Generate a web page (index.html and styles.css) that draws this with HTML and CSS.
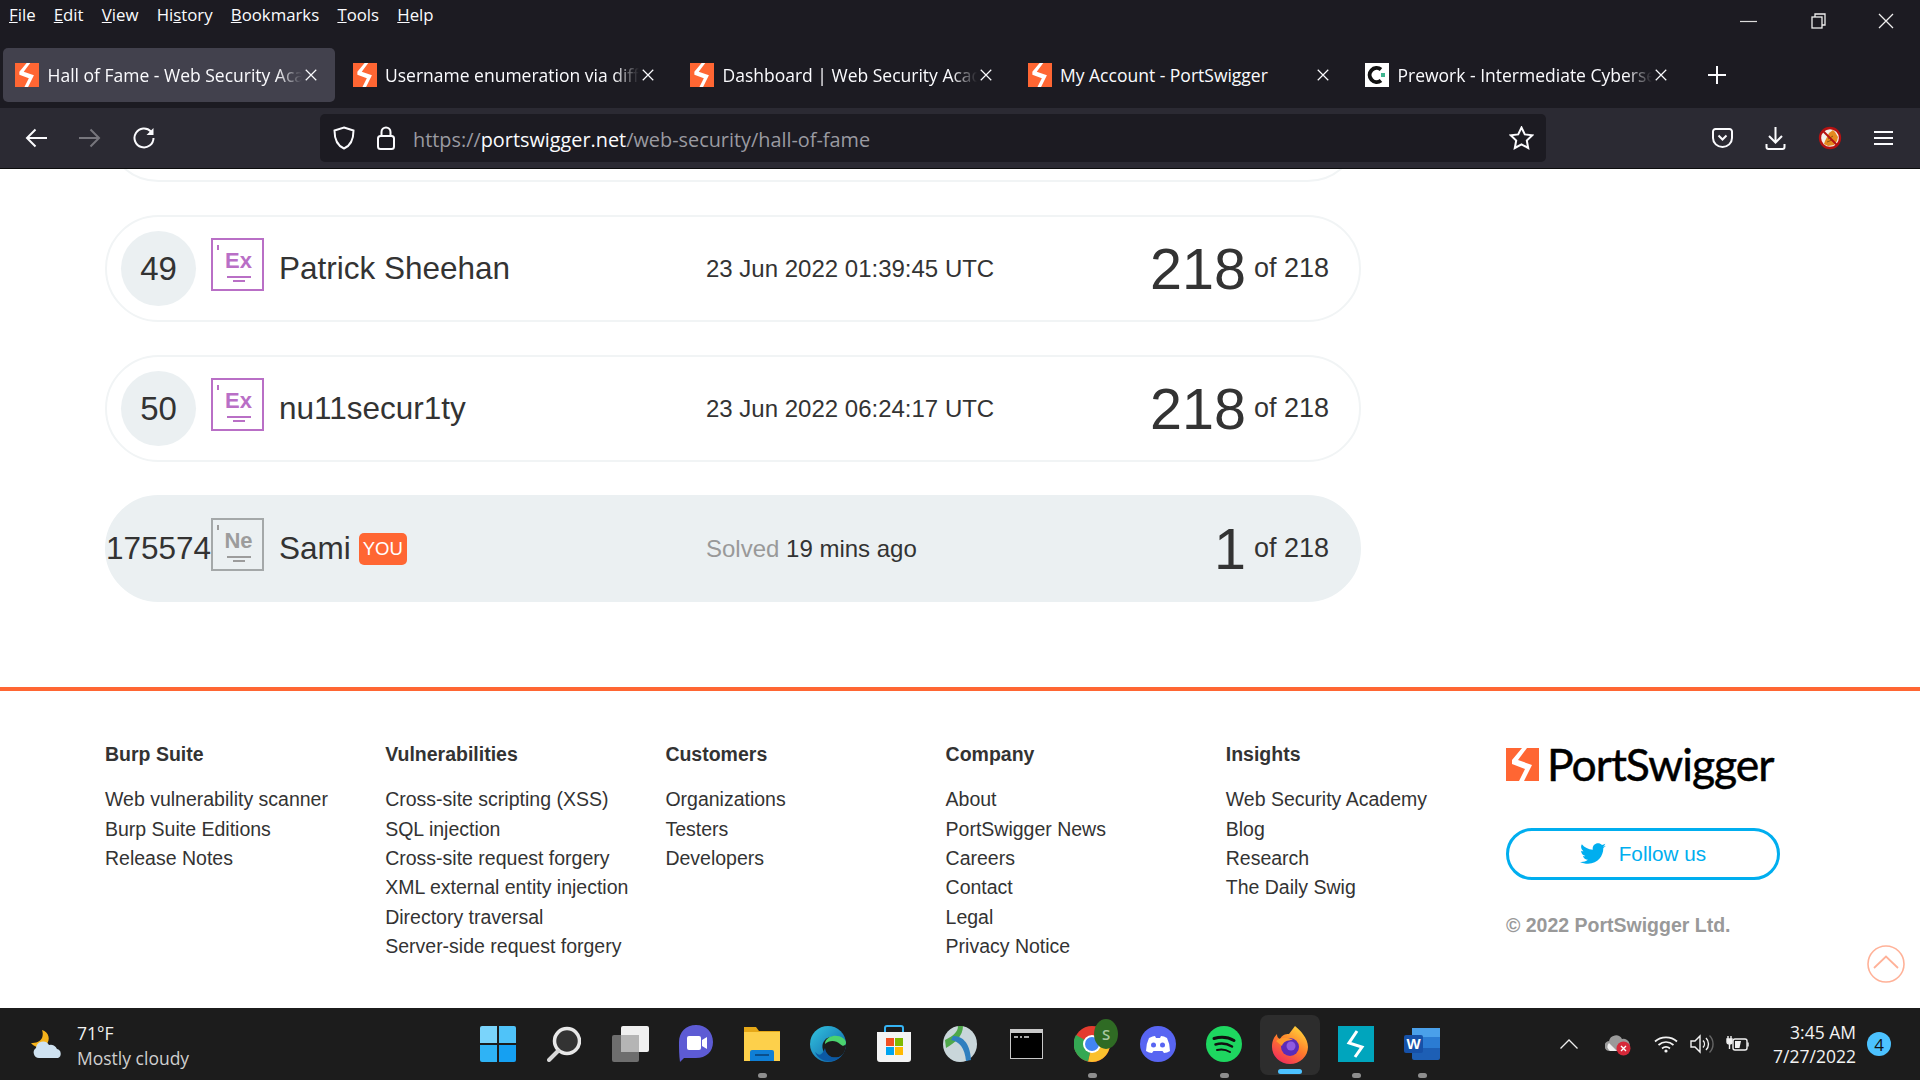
FILE: index.html
```html
<!DOCTYPE html>
<html lang="en">
<head>
<meta charset="utf-8">
<title>Hall of Fame - Web Security Academy</title>
<link rel="stylesheet" href="styles.css">
</head>
<body>
<svg class="defs" width="0" height="0" aria-hidden="true">
  <symbol id="ps" viewBox="0 0 33 33">
    <rect width="33" height="33" fill="#ff6633"/>
    <polygon fill="#fff" points="16,0 21,0 12,12 26,17 18,33 13,33 19,21 6,16 6,12"/>
  </symbol>
  <symbol id="x" viewBox="0 0 16 16"><path d="M2 2L14 14M14 2L2 14" stroke="currentColor" stroke-width="1.4" fill="none"/></symbol>
</svg>
<div class="app">
  <header class="menubar">
    <nav class="menu">
      <span><u>F</u>ile</span><span><u>E</u>dit</span><span><u>V</u>iew</span><span>Hi<u>s</u>tory</span><span><u>B</u>ookmarks</span><span><u>T</u>ools</span><span><u>H</u>elp</span>
    </nav>
    <div class="winctl">
      <svg width="17" height="16" viewBox="0 0 17 16"><path d="M0 8.5H17" stroke="#ddd" stroke-width="1.2"/></svg>
      <svg width="16" height="16" viewBox="0 0 16 16" fill="none" stroke="#eee" stroke-width="1.3"><rect x="2" y="4" width="10" height="11"/><path d="M5 4V1H15V12H12"/></svg>
      <svg width="16" height="16" viewBox="0 0 16 16" fill="none" stroke="#eee" stroke-width="1.3"><path d="M1 1L15 15M15 1L1 15"/></svg>
    </div>
  </header>
  <div class="tabstrip">
    <div class="tab active"><svg class="fav"><use href="#ps"/></svg><span class="tabt fade">Hall of Fame - Web Security Academy</span><svg class="tabx"><use href="#x"/></svg></div>
    <div class="tab"><svg class="fav"><use href="#ps"/></svg><span class="tabt fade">Username enumeration via different responses</span><svg class="tabx"><use href="#x"/></svg></div>
    <div class="tab"><svg class="fav"><use href="#ps"/></svg><span class="tabt fade">Dashboard | Web Security Academy</span><svg class="tabx"><use href="#x"/></svg></div>
    <div class="tab"><svg class="fav"><use href="#ps"/></svg><span class="tabt">My Account - PortSwigger</span><svg class="tabx"><use href="#x"/></svg></div>
    <div class="tab"><svg class="fav" viewBox="0 0 24 24"><rect width="24" height="24" fill="#fff"/><path d="M16 6.5A7 7 0 1 0 16 17.500" fill="none" stroke="#111" stroke-width="4"/><rect x="16" y="10" width="4" height="4" fill="#3fb58f"/></svg><span class="tabt fade">Prework - Intermediate Cybersecurity</span><svg class="tabx"><use href="#x"/></svg></div>
    <svg class="plus" width="18" height="18" viewBox="0 0 18 18"><path d="M9 0V18M0 9H18" stroke="#fbfbfe" stroke-width="2"/></svg>
  </div>
  <div class="toolbar">
    <div class="navbtns">
      <svg width="22" height="20" viewBox="0 0 22 20" fill="none" stroke="#fbfbfe" stroke-width="2"><path d="M22 10H2M10.500 1.500L2 10L10.500 18.500"/></svg>
      <svg width="22" height="20" viewBox="0 0 22 20" fill="none" stroke="#77767d" stroke-width="2"><path d="M0 10H20M11.500 1.500L20 10L11.500 18.500"/></svg>
      <svg width="22" height="22" viewBox="0 0 22 22" fill="none" stroke="#fbfbfe" stroke-width="2"><path d="M18 4.500A9.500 9.500 0 1 0 20.500 11"/><path d="M20.500 1V8H13.500Z" fill="#fbfbfe" stroke="none"/></svg>
    </div>
    <div class="urlbar">
      <svg width="22" height="24" viewBox="0 0 22 24" fill="none" stroke="#fbfbfe" stroke-width="2"><path d="M11 1.500L20.500 4.500C20.500 14 18 19.500 11 22.500C4 19.500 1.500 14 1.500 4.500Z"/></svg>
      <svg class="lock" width="18" height="24" viewBox="0 0 18 24" fill="none" stroke="#fbfbfe" stroke-width="2"><rect x="1" y="10" width="16" height="13" rx="2.500"/><path d="M4.500 10V6A4.500 4.500 0 0 1 13.500 6V10"/></svg>
      <span class="url">https://<b>portswigger.net</b>/web-security/hall-of-fame</span>
      <svg width="25" height="24" viewBox="0 0 25 24" fill="none" stroke="#fbfbfe" stroke-width="2"><path d="M12.500 1.500L15.800 8.400L23.300 9.300L17.800 14.500L19.200 22L12.500 18.300L5.800 22L7.200 14.500L1.700 9.300L9.200 8.400Z"/></svg>
    </div>
    <div class="tools">
      <svg width="21" height="20" viewBox="0 0 21 20" fill="none" stroke="#fbfbfe" stroke-width="2"><path d="M1 3.500A2.500 2.500 0 0 1 3.500 1H17.500A2.500 2.500 0 0 1 20 3.500V10A9.500 9 0 0 1 1 10Z"/><path d="M6.500 7.500L10.500 11.500L14.500 7.500"/></svg>
      <svg width="21" height="24" viewBox="0 0 21 24" fill="none" stroke="#fbfbfe" stroke-width="2"><path d="M10.500 1V16M4 10L10.500 16.500L17 10M1.500 18V21Q1.500 23 3.500 23H17.500Q19.500 23 19.500 21V18"/></svg>
      <svg width="24" height="24" viewBox="0 0 24 24"><circle cx="12" cy="12" r="10" fill="#f3f0ea"/><path d="M7 15L11 7L15 4L17 6L20 11L19 15L16 19L10 20L6 18Z" fill="#e58a1f"/><path d="M10 13L15 10M9 16L14 14" stroke="#8a5a14" stroke-width="1"/><circle cx="12" cy="12" r="10" fill="none" stroke="#b51212" stroke-width="2.300"/><path d="M5 5L19 19" stroke="#b51212" stroke-width="2"/></svg>
      <svg class="burger" width="19" height="16" viewBox="0 0 19 16"><path d="M0 2H19M0 8H19M0 14H19" stroke="#fbfbfe" stroke-width="2"/></svg>
    </div>
  </div>

  <main class="page">
    <section class="board">
      <div class="row"></div>
      <div class="row">
        <div class="rank">49</div>
        <div class="badge ex"><i></i><b>Ex</b><em></em><s></s></div>
        <div class="name">Patrick Sheehan</div>
        <div class="when">23 Jun 2022 01:39:45 UTC</div>
        <div class="score"><strong>218</strong><span>of 218</span></div>
      </div>
      <div class="row">
        <div class="rank">50</div>
        <div class="badge ex"><i></i><b>Ex</b><em></em><s></s></div>
        <div class="name">nu11secur1ty</div>
        <div class="when">23 Jun 2022 06:24:17 UTC</div>
        <div class="score"><strong>218</strong><span>of 218</span></div>
      </div>
      <div class="row me">
        <div class="rank long">175574</div>
        <div class="badge ne"><i></i><b>Ne</b><em></em><s></s></div>
        <div class="name">Sami<span class="you">YOU</span></div>
        <div class="when"><span class="muted">Solved</span> 19 mins ago</div>
        <div class="score"><strong>1</strong><span>of 218</span></div>
      </div>
    </section>
    <footer class="foot">
      <div class="col"><h4>Burp Suite</h4><a>Web vulnerability scanner</a><a>Burp Suite Editions</a><a>Release Notes</a></div>
      <div class="col"><h4>Vulnerabilities</h4><a>Cross-site scripting (XSS)</a><a>SQL injection</a><a>Cross-site request forgery</a><a>XML external entity injection</a><a>Directory traversal</a><a>Server-side request forgery</a></div>
      <div class="col"><h4>Customers</h4><a>Organizations</a><a>Testers</a><a>Developers</a></div>
      <div class="col"><h4>Company</h4><a>About</a><a>PortSwigger News</a><a>Careers</a><a>Contact</a><a>Legal</a><a>Privacy Notice</a></div>
      <div class="col"><h4>Insights</h4><a>Web Security Academy</a><a>Blog</a><a>Research</a><a>The Daily Swig</a></div>
      <div class="brand">
        <div class="logo"><svg class="logomark"><use href="#ps"/></svg><span>PortSwigger</span></div>
        <div class="follow">
          <svg width="26" height="22" viewBox="0 0 24 20"><path fill="#00aeef" d="M24 2.400c-.9.400-1.800.700-2.800.800 1-.600 1.800-1.600 2.200-2.700-1 .600-2 1-3.100 1.200C19.300.600 18 0 16.600 0c-2.700 0-4.900 2.200-4.900 4.900 0 .400 0 .800.100 1.100C7.700 5.800 4.100 3.800 1.700.900c-.400.700-.700 1.600-.700 2.500 0 1.700.900 3.200 2.200 4.100-.800 0-1.600-.200-2.200-.600v.100c0 2.400 1.700 4.400 3.900 4.800-.400.100-.800.200-1.300.200-.300 0-.600 0-.900-.100.600 2 2.400 3.400 4.600 3.400-1.700 1.300-3.800 2.100-6.100 2.100-.400 0-.800 0-1.200-.100C2.200 18.200 4.800 19 7.500 19c9.100 0 14-7.500 14-14v-.600c1-.700 1.800-1.600 2.500-2z"/></svg>
          <span>Follow us</span>
        </div>
        <div class="copy">© 2022 PortSwigger Ltd.</div>
      </div>
    </footer>
    <svg class="totop" width="38" height="38" viewBox="0 0 38 38" fill="none" stroke="#ff6633" stroke-width="1.600"><circle cx="19" cy="19" r="18"/><path d="M7 23L19 11.500L31 23" stroke-width="1.800"/></svg>
  </main>

  <footer class="taskbar">
    <div class="weather">
      <svg width="32" height="29" viewBox="0 0 32 29"><path d="M11 0C18 2 20 10 15 15C11 19 4 18 0 13C5 13 9 12 11 8C12 5 12 3 11 0Z" fill="#f6b31b"/><path d="M8 28A5.500 5.500 0 0 1 5 18A7 7 0 0 1 18 15A6.500 6.500 0 0 1 26 19A4.800 4.800 0 0 1 27 28Z" fill="#cfe2f1"/></svg>
      <div class="wtext"><span>71°F</span><span class="dim">Mostly cloudy</span></div>
    </div>
    <div class="apps">
      <div class="app-i"><svg width="36" height="36" viewBox="0 0 36 36"><path d="M0 2A2 2 0 0 1 2 0H17V17H0Z" fill="#7ad4fb"/><path d="M19 0H34A2 2 0 0 1 36 2V17H19Z" fill="#4fc3f9"/><path d="M0 19H17V36H2A2 2 0 0 1 0 34Z" fill="#2fb3f5"/><path d="M19 19H36V34A2 2 0 0 1 34 36H19Z" fill="#15a0f2"/></svg></div>
      <div class="app-i"><svg width="34" height="36" viewBox="0 0 34 36" fill="none"><circle cx="20" cy="15" r="12.500" stroke="#e8e8e8" stroke-width="3.500" fill="#333"/><path d="M11 25L2 34" stroke="#d8d8d8" stroke-width="4" stroke-linecap="round"/></svg></div>
      <div class="app-i"><svg width="37" height="36" viewBox="0 0 37 36"><rect x="9" y="0" width="28" height="26" rx="2" fill="#f0f0f0"/><rect x="0" y="9" width="27" height="27" rx="2" fill="#7c7c7c" opacity=".85"/><rect x="9" y="9" width="18" height="17" fill="#b5b5b5"/></svg></div>
      <div class="app-i"><svg width="34" height="38" viewBox="0 0 34 38"><path d="M17 0C27 0 34 7 34 17C34 27 27 33 17 33H5L1 37C0 30 0 24 0 17C0 7 7 0 17 0Z" fill="#5d5bd4"/><rect x="8" y="11" width="14" height="14" rx="2" fill="#fff"/><path d="M23 15L28 12V24L23 21Z" fill="#fff"/></svg></div>
      <div class="app-i"><svg width="36" height="36" viewBox="0 0 36 36"><path d="M0 1H12L15 5H36V34H0Z" fill="#e6a817"/><rect y="6" width="36" height="29" fill="#fdd04b"/><path d="M6 35V26Q6 24 8 24H28Q30 24 30 26V35Z" fill="#0f7fd6"/><rect x="11" y="28" width="14" height="2" fill="#0a4f8c"/></svg></div>
      <div class="app-i"><svg width="36" height="36" viewBox="0 0 36 36"><defs><linearGradient id="eg" x1="0" y1="0" x2="1" y2="1"><stop offset="0" stop-color="#33c6e0"/><stop offset="1" stop-color="#0c59a4"/></linearGradient></defs><circle cx="18" cy="18" r="18" fill="url(#eg)"/><path d="M36 20C34 14 28 10 21 11C14 12 11 18 13 24C15 30 22 33 29 31C33 29 35 26 36 20Z" fill="#1c1c1c"/><path d="M36 17C36 13 30 9 23 10C18 11 15 14 15 18C19 14 26 14 30 18C33 21 35 20 36 17Z" fill="#4bd36f"/><path d="M15 22C16 30 24 34 31 30C26 37 10 38 5 26C9 30 12 30 15 22Z" fill="#0c59a4"/></svg></div>
      <div class="app-i"><svg width="36" height="38" viewBox="0 0 36 38"><path d="M9 9V3Q9 1 11 1H25Q27 1 27 3V9" fill="none" stroke="#35b4f4" stroke-width="2"/><path d="M1 7H35V34Q35 37 32 37H4Q1 37 1 34Z" fill="#f4f4f4"/><rect x="10" y="13" width="8" height="8" fill="#f25022"/><rect x="19" y="13" width="8" height="8" fill="#7fba00"/><rect x="10" y="22" width="8" height="8" fill="#00a4ef"/><rect x="19" y="22" width="8" height="8" fill="#ffb900"/></svg></div>
      <div class="app-i"><svg width="34" height="36" viewBox="0 0 34 36"><ellipse cx="17" cy="18" rx="17" ry="18" fill="#c9d6da"/><path d="M2 14C10 10 15 6 15 0H20C20 10 12 17 3 22Z" fill="#4fa84a"/><path d="M10 10C18 10 27 15 28 34L23 35C22 22 16 15 8 14Z" fill="#2f7fbf"/></svg></div>
      <div class="app-i"><svg width="33" height="30" viewBox="0 0 33 30"><rect width="33" height="30" fill="#c8c8c8"/><rect x="1" y="4" width="31" height="25" fill="#000"/><path d="M4 8H8M10 8H12M14 8H19" stroke="#ddd" stroke-width="1.500"/></svg></div>
      <div class="app-i chrome"><svg width="36" height="36" viewBox="0 0 36 36"><circle cx="18" cy="18" r="18" fill="#e33b2e"/><path d="M18 18L36 18A18 18 0 0 1 14 35.500Z" fill="#fbc02d"/><path d="M18 18L14 35.500A18 18 0 0 1 2 9Z" fill="#34a853"/><circle cx="18" cy="18" r="9" fill="#fff"/><circle cx="18" cy="18" r="7" fill="#4285f4"/></svg><span class="sbadge">S</span></div>
      <div class="app-i"><svg width="36" height="36" viewBox="0 0 36 36"><ellipse cx="18" cy="18" rx="18" ry="18" fill="#5865f2"/><path d="M9 12Q13 10 15 10L16 12H20L21 10Q24 10 27 12Q30 18 30 25Q27 27 24 27L22.500 25H13.500L12 27Q9 27 6 25Q6 18 9 12Z" fill="#fff"/><circle cx="13.500" cy="19" r="2.500" fill="#5865f2"/><circle cx="22.500" cy="19" r="2.500" fill="#5865f2"/></svg></div>
      <div class="app-i"><svg width="36" height="36" viewBox="0 0 36 36" fill="none"><circle cx="18" cy="18" r="18" fill="#1ed760"/><path d="M8 12.500C15 10.500 22 11 28 14.500" stroke="#111" stroke-width="3" stroke-linecap="round"/><path d="M9.500 18.500C15 17 21 17.500 26 20.500" stroke="#111" stroke-width="2.500" stroke-linecap="round"/><path d="M11 24C15 23 20 23.500 24 26" stroke="#111" stroke-width="2" stroke-linecap="round"/></svg></div>
      <div class="app-i cur"><svg width="36" height="38" viewBox="0 0 36 38"><defs><linearGradient id="fg" x1="0.800" y1="0" x2="0.200" y2="1"><stop offset="0" stop-color="#ffd93b"/><stop offset=".5" stop-color="#ff7a2b"/><stop offset="1" stop-color="#f0265f"/></linearGradient></defs><path d="M23 0C28 4 36 12 36 21A18 17 0 0 1 0 21C0 15 2 11 5 8C5 11 6 12 8 13C10 9 13 8 17 8C19 5 21 3 23 0Z" fill="url(#fg)"/><circle cx="18" cy="21" r="9" fill="#5b2bb8"/><circle cx="19" cy="20" r="4.500" fill="#8f5be0"/><path d="M4 15C9 11 16 11 21 14C15 14 11 16 10 20Z" fill="#ff9a2e"/></svg></div>
      <div class="app-i"><svg width="36" height="36" viewBox="0 0 36 36"><rect width="36" height="36" fill="#00a5bd"/><path d="M19 5L11 17L24 21L17 31" fill="none" stroke="#fff" stroke-width="3"/></svg></div>
      <div class="app-i"><svg width="36" height="36" viewBox="0 0 36 36"><rect x="8" y="2" width="28" height="32" rx="2" fill="#1d5fb5"/><rect x="8" y="2" width="28" height="9" fill="#4aa0ea"/><rect x="8" y="11" width="28" height="11" fill="#2b7cd3"/><rect y="9" width="19" height="18" rx="2" fill="#1651a8"/><text x="9.500" y="23" class="wordw">W</text></svg></div>
    </div>
    <div class="tray">
      <svg class="chev" width="18" height="10" viewBox="0 0 18 10" fill="none" stroke="#eee" stroke-width="1.300"><path d="M0.500 9.500L9 1L17.500 9.500"/></svg>
      <svg class="cloud" width="26" height="24" viewBox="0 0 26 24"><path d="M5 19A5 5 0 0 1 4 9A7 7 0 0 1 17 7A6 6 0 0 1 20 19Z" fill="#9a9a9a"/><path d="M5 19A5 5 0 0 1 4 11L12 19Z" fill="#eee"/><circle cx="18.500" cy="16.500" r="7" fill="#d62839"/><path d="M16 14L21 19M21 14L16 19" stroke="#fff" stroke-width="1.400"/></svg>
      <svg class="wifi" width="24" height="18" viewBox="0 0 24 18" fill="none" stroke="#f2f2f2" stroke-width="1.700"><path d="M1 6.500C7 1 17 1 23 6.500M4.500 10C9 6 15 6 19.500 10M8 13.500C10.500 11.500 13.500 11.500 16 13.500"/><circle cx="12" cy="16" r="1.600" fill="#f2f2f2" stroke="none"/></svg>
      <svg class="vol" width="24" height="20" viewBox="0 0 24 20" fill="none" stroke="#f2f2f2" stroke-width="1.400"><path d="M1 7V13H5L10 18V2L5 7Z"/><path d="M13 6.500A5 5 0 0 1 13 13.500M16 4A8.500 8.500 0 0 1 16 16"/><path d="M19.500 1.500A12 12 0 0 1 19.500 18.500" stroke="#666"/></svg>
      <svg class="batt" width="24" height="16" viewBox="0 0 24 16" fill="none" stroke="#f2f2f2" stroke-width="1.400"><rect x="7" y="3" width="14" height="11" rx="2"/><path d="M22 6.500V10.500"/><path d="M9 5H15L13.500 12H9Z" fill="#f2f2f2" stroke="none"/><path d="M2 0V3M5 0V3M1 3H6V6Q6 8 3.500 8Q1 8 1 6ZM3.500 8V13" fill="#f2f2f2"/></svg>
      <div class="clock"><span>3:45 AM</span><span>7/27/2022</span></div>
      <span class="notif">4</span>
    </div>
  </footer>
</div>
</body>
</html>
```

FILE: styles.css
```css
* { box-sizing: border-box; }
html, body { margin: 0; padding: 0; height: 100%; }
body { font-family: "Liberation Sans", Arial, sans-serif; color: #333; background: #fff; overflow: hidden; }
.defs { position: absolute; }
.app { width: 1920px; height: 1080px; display: flex; flex-direction: column; overflow: hidden; }

/* menu bar */
.menubar { height: 48px; flex: none; background: #1c1b22; color: #fbfbfe; display: flex; justify-content: space-between; align-items: flex-start; font-family: "Open Sans", sans-serif; }
.menu { display: flex; gap: 18.200px; padding: 3px 0 0 9px; font-size: 16.800px; line-height: 24px; }
.winctl { display: flex; gap: 52.500px; padding: 13px 26px 0 0; }
.winctl svg { display: block; }

/* tabs */
.tabstrip { height: 60px; flex: none; background: #1c1b22; display: flex; padding: 0 0 6px 3px; color: #fbfbfe; font-family: "Open Sans", sans-serif; font-size: 17.500px; align-items: stretch; }
.tab { width: 332px; margin-right: 5.500px; border-radius: 5px; display: flex; align-items: center; padding-left: 12px; }
.tab.active { background: #42414d; }
.fav { width: 24px; height: 24px; flex: none; }
.tabt { margin-left: 8.500px; width: 254px; white-space: nowrap; overflow: hidden; flex: none; }
.fade { -webkit-mask-image: linear-gradient(to right, #000 90%, transparent 100%); mask-image: linear-gradient(to right, #000 90%, transparent 100%); }
.tabx { width: 14px; height: 14px; margin-left: 2px; flex: none; color: #fbfbfe; }
.plus { align-self: center; margin-left: 17px; }

/* toolbar */
.toolbar { height: 61px; flex: none; background: #2b2a33; border-bottom: 1px solid #0c0c0d; display: flex; align-items: center; color: #fbfbfe; }
.navbtns { width: 320px; flex: none; display: flex; align-items: center; gap: 32px; padding-left: 25px; }
.urlbar { width: 1226px; height: 48px; flex: none; background: #1c1b22; border-radius: 5px; display: flex; align-items: center; padding: 0 12px 0 13px; }
.lock { margin-left: 22px; }
.url { margin: 2px 0 0 18px; flex: 1; font-family: "Open Sans", sans-serif; font-size: 19.850px; color: #9a9aa1; white-space: nowrap; }
.url b { font-weight: 400; color: #fbfbfe; }
.tools { flex: 1; display: flex; align-items: center; gap: 32px; padding-left: 166px; }
.tools svg { flex: none; }

/* page */
.page { flex: 1; position: relative; overflow: hidden; background: #fff; min-height: 0; }
.board { margin: -94px 0 85px 105px; width: 1256px; display: flex; flex-direction: column; gap: 33px; }
.row { height: 107px; border: 2px solid #f1f4f5; border-radius: 54px; display: flex; align-items: center; padding-left: 14px; }
.row.me { background: #ebf0f2; border-color: #ebf0f2; padding-left: 0; }
.rank { width: 75px; height: 75px; border-radius: 50%; background: #ebf0f2; flex: none; display: flex; align-items: center; justify-content: center; font-size: 33px; margin-right: 15px; }
.rank.long { width: 104px; margin: 0; justify-content: flex-end; background: none; border-radius: 0; font-size: 31.500px; }
.badge { width: 53px; height: 53px; flex: none; border: 2px solid #b96fc6; position: relative; margin: -9px 15px 0 0; color: #b96fc6; display: flex; flex-direction: column; align-items: center; font-size: 22px; line-height: 24px; }
.badge i { position: absolute; left: 4px; top: 5px; width: 2px; height: 5px; background: currentColor; }
.badge b { margin: 9px 0 0 2px; }
.badge em { width: 24px; height: 2px; background: currentColor; margin: 3px 0 0 2px; }
.badge s { width: 12px; height: 2px; background: currentColor; margin: 2px 0 0 2px; }
.badge.ne { color: #9c9c9c; border-color: #a4a8a9; }
.name { width: 427px; flex: none; font-size: 31.500px; display: flex; align-items: center; }
.you { background: #ff6633; color: #fff; font-size: 18.500px; line-height: 32px; height: 32px; padding: 0 4px; border-radius: 5px; margin: 1px 0 0 8px; }
.when { width: 392px; flex: none; font-size: 24px; }
.muted { color: #999; }
.score { flex: 1; display: flex; align-items: center; justify-content: flex-end; padding-right: 30px; gap: 8px; font-size: 27px; }
.score strong { font-weight: 400; font-size: 57.500px; line-height: 60px; }

/* footer */
.foot { height: 321px; border-top: 4px solid #ff6633; padding: 49px 0 0 105px; display: grid; grid-template-columns: repeat(5, 280.200px) auto; align-items: start; }
.col { display: flex; flex-direction: column; font-size: 19.500px; line-height: 29.300px; }
.col h4 { margin: 0 0 16px; font-size: 19.500px; line-height: 29.400px; font-weight: 700; }
.col a { color: #333; }
.brand { display: flex; flex-direction: column; align-items: flex-start; }
.logo { display: flex; align-items: center; gap: 8px; height: 40px; margin-top: 4px; color: #000; }
.logomark { width: 33px; height: 33px; }
.logo span { font-family: "Lato", sans-serif; font-size: 44.500px; line-height: 40px; letter-spacing: -1px; -webkit-text-stroke: .5px #000; }
.follow { margin-top: 44px; width: 274px; height: 52px; border: 3px solid #00aeef; border-radius: 26px; display: flex; align-items: center; justify-content: center; gap: 13px; color: #00aeef; font-size: 20.700px; }
.copy { margin-top: 34px; font-size: 19.500px; font-weight: 700; color: #999; }
.totop { position: absolute; left: 1867px; top: 776px; opacity: .5; }

/* taskbar */
.taskbar { height: 72px; flex: none; background: #1c1c1c; display: flex; align-items: stretch; color: #f2f2f2; font-family: "Open Sans", sans-serif; position: relative; }
.weather { width: 465px; flex: none; display: flex; align-items: center; gap: 14px; padding-left: 31px; font-size: 17.500px; }
.wtext { display: flex; flex-direction: column; line-height: 24.500px; margin-top: 3px; }
.dim { color: #cfcfcf; }
.apps { display: flex; width: 990px; flex: none; }
.app-i { width: 66px; position: relative; display: flex; align-items: center; justify-content: center; }
.app-i:nth-child(5)::after, .app-i:nth-child(10)::after, .app-i:nth-child(12)::after, .app-i:nth-child(14)::after, .app-i:nth-child(15)::after { content: ""; position: absolute; bottom: 2px; left: 29px; width: 9px; height: 5px; border-radius: 3px; background: #8e8e8e; }
.app-i.cur { background: #2d2d2d; border-radius: 8px; margin: 7px 3px 5px; width: 60px; }
.app-i.cur::after { content: ""; position: absolute; bottom: 1px; left: 18px; width: 24px; height: 5px; border-radius: 3px; background: #4cc2ff; }
.wordw { font: 700 15px "Liberation Sans", sans-serif; fill: #fff; text-anchor: middle; }
.sbadge { position: absolute; left: 35px; top: 11px; width: 24px; height: 30px; border-radius: 50%; background: #2f6b24; color: #a9c8a0; font-size: 15px; font-weight: 600; display: flex; align-items: center; justify-content: center; }
.tray { flex: 1; display: flex; align-items: center; position: relative; }
.tray svg { flex: none; }
.chev { margin-left: 105px; }
.cloud { margin-left: 27px; }
.wifi { margin-left: 23px; }
.vol { margin-left: 12px; }
.batt { margin-left: 12px; }
.clock { width: 106px; display: flex; flex-direction: column; align-items: flex-end; font-size: 17.500px; line-height: 24px; }
.notif { width: 24px; height: 24px; margin-left: 11px; border-radius: 50%; background: #4cc2ff; color: #111; font-size: 17px; display: flex; align-items: center; justify-content: center; }
```
